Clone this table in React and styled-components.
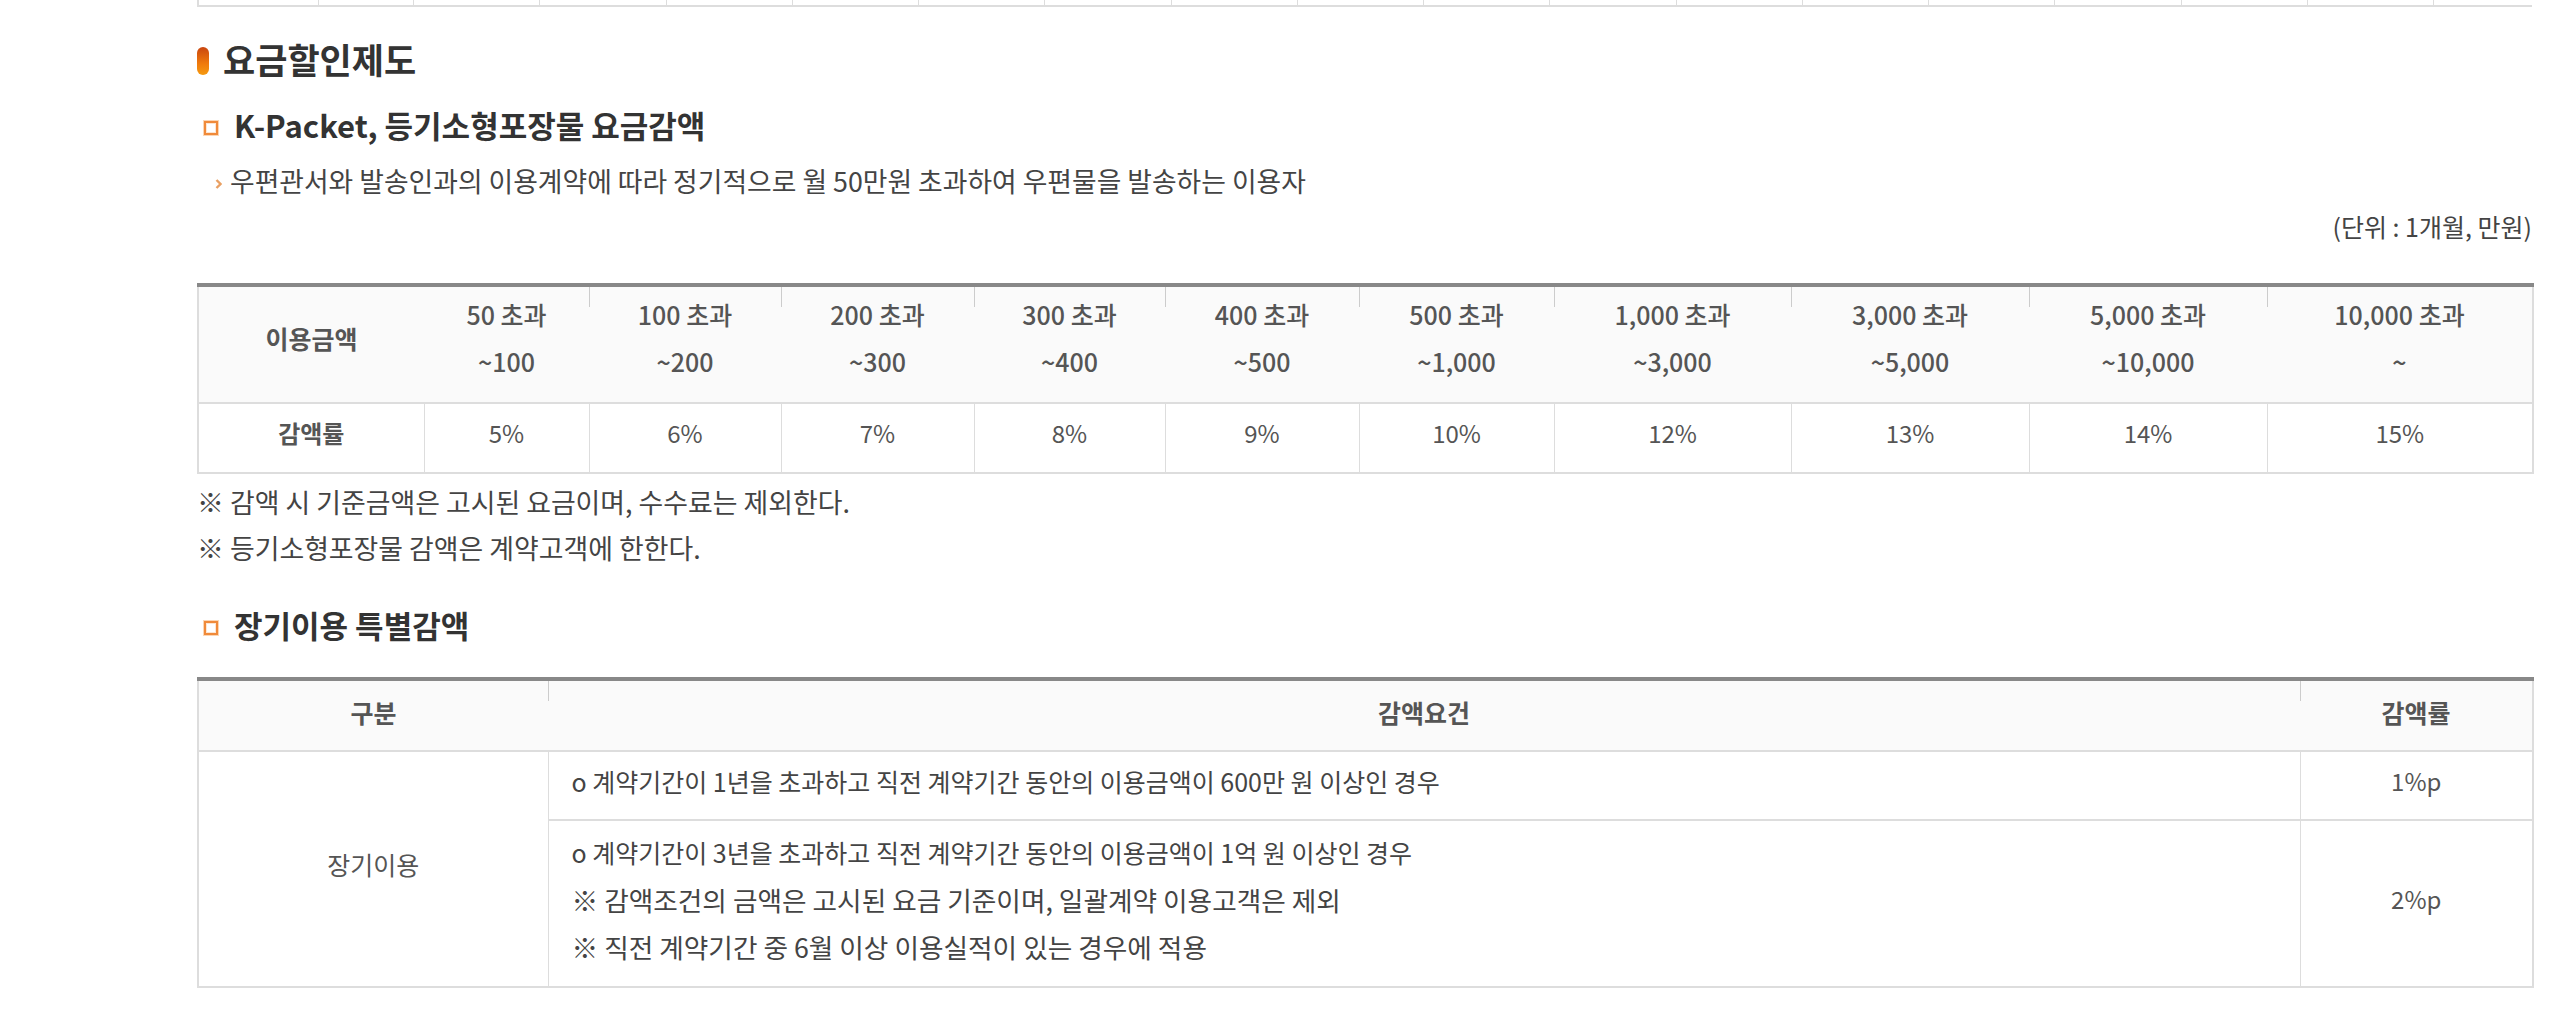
import React from 'react';
import styled, { createGlobalStyle } from 'styled-components';

const GlobalStyle = createGlobalStyle`
  body {
    margin: 0;
    background: #fff;
    font-family: "Noto Sans CJK KR", "Noto Sans", sans-serif;
    color: #444;
  }
`;

const Page = styled.div`
  width: 2335px;
  padding-left: 197px;
  padding-bottom: 26px;
`;

// bottom edge of the table above, cut off by the screenshot
const PrevTable = styled.div`
  display: grid;
  grid-template-columns: 120px 95px repeat(16, 1fr) 98px;
  height: 5px;
  border-left: 2px solid #ddd;
  border-bottom: 2px solid #ddd;
`;

const PrevCell = styled.div`
  border-right: 1px solid #ddd;
  &:last-child { border-right: none; }
`;

const Title = styled.h2`
  display: flex;
  align-items: center;
  gap: 14px;
  margin: 31px 0 0;
  font-size: 35px;
  line-height: 42px;
  font-weight: 700;
  color: #333;
`;

const TitleBar = styled.span`
  width: 12px;
  height: 28px;
  margin-top: 4px;
  border-radius: 6px;
  background: linear-gradient(to bottom, #c94610, #f07a0c 60%, #f59a10);
`;

const SubTitle = styled.h3`
  display: flex;
  align-items: center;
  gap: 16px;
  margin: ${p => p.$top}px 0 0;
  padding-left: 7px;
  font-size: 31px;
  line-height: 36px;
  font-weight: 700;
  color: #333;
`;

const SubMark = styled.span`
  box-sizing: border-box;
  width: 14px;
  height: 14px;
  margin-top: 6px;
  border: 2px solid #f08a3a;
  background: #fff;
  box-shadow: 0 0 0 1px #fcd6b4, inset 0 0 0 1px #fde6d2;
`;

const Desc = styled.p`
  display: flex;
  align-items: center;
  gap: 8px;
  margin: 21px 0 0;
  padding-left: 18px;
  font-size: 26.8px;
  line-height: 34px;
  color: #444;
`;

const Unit = styled.p`
  margin: 12px 0 0;
  text-align: right;
  font-size: 25px;
  line-height: 32px;
  color: #444;
`;

const Table = styled.table`
  width: 100%;
  table-layout: fixed;
  border-collapse: collapse;
  margin-top: ${p => p.$top}px;
  border-top: 4px solid #888;
  border-left: 2px solid #ddd;
  border-right: 2px solid #ddd;
  border-bottom: 2px solid #ddd;
  font-size: 24px;
  color: #555;
`;

const Th = styled.th`
  position: relative;
  background: #fafafa;
  padding: ${p => p.$pad || '4px 0 17px'};
  font-size: ${p => p.$size || 25}px;
  line-height: ${p => p.$lh || 47}px;
  font-weight: ${p => (p.$strong ? 700 : 500)};
  text-align: center;
  color: #555;
  border-bottom: 2px solid #ddd;

  & + &::before {
    content: '';
    position: absolute;
    left: 0;
    top: 0;
    width: 1px;
    height: 20px;
    background: #ccc;
  }
`;

const Td = styled.td`
  padding: ${p => p.$pad || '12px 0 22px'};
  font-size: ${p => p.$size || 24}px;
  line-height: ${p => p.$lh || 34}px;
  text-align: ${p => p.$align || 'center'};
  font-weight: ${p => (p.$strong ? 700 : 400)};
  border: 1px solid #ddd;
  border-bottom: 2px solid #ddd;
  vertical-align: middle;
`;

const Line = styled.div`
  font-size: ${p => p.$size || 26.7}px;
  line-height: 47px;
  color: #444;
`;

const Notes = styled.ul`
  list-style: none;
  margin: 5px 0 0;
  padding: 0;
  font-size: 26.9px;
  line-height: 46px;
  color: #444;
`;

const Chevron = () => (
  <svg width="7" height="10" viewBox="0 0 7 10" style={{ marginTop: 6 }}>
    <polyline points="1.5,1 5.5,5 1.5,9" fill="none" stroke="#e9a063" strokeWidth="2.4" />
  </svg>
);

const rangeCols = [226, 165, 192, 193, 191, 194, 195, 237, 238, 238, 266];
const ranges = [
  ['50 초과', '~100'],
  ['100 초과', '~200'],
  ['200 초과', '~300'],
  ['300 초과', '~400'],
  ['400 초과', '~500'],
  ['500 초과', '~1,000'],
  ['1,000 초과', '~3,000'],
  ['3,000 초과', '~5,000'],
  ['5,000 초과', '~10,000'],
  ['10,000 초과', '~'],
];
const rates = ['5%', '6%', '7%', '8%', '9%', '10%', '12%', '13%', '14%', '15%'];

export default function App() {
  return (
    <>
      <GlobalStyle />
      <Page>
        <PrevTable>
          {Array.from({ length: 19 }).map((_, i) => <PrevCell key={i} />)}
        </PrevTable>

        <Title><TitleBar />요금할인제도</Title>

        <SubTitle $top={27}><SubMark />K-Packet, 등기소형포장물 요금감액</SubTitle>
        <Desc><Chevron />우편관서와 발송인과의 이용계약에 따라 정기적으로 월 50만원 초과하여 우편물을 발송하는 이용자</Desc>
        <Unit>(단위 : 1개월, 만원)</Unit>

        <Table $top={41}>
          <colgroup>
            {rangeCols.map((w, i) => <col key={i} style={{ width: w }} />)}
          </colgroup>
          <thead>
            <tr>
              <Th $strong>이용금액</Th>
              {ranges.map(([a, b]) => (
                <Th key={a}>{a}<br />{b}</Th>
              ))}
            </tr>
          </thead>
          <tbody>
            <tr>
              <Td $strong>감액률</Td>
              {rates.map(r => <Td key={r}>{r}</Td>)}
            </tr>
          </tbody>
        </Table>

        <Notes>
          <li>※ 감액 시 기준금액은 고시된 요금이며, 수수료는 제외한다.</li>
          <li>※ 등기소형포장물 감액은 계약고객에 한한다.</li>
        </Notes>

        <SubTitle $top={36}><SubMark />장기이용 특별감액</SubTitle>

        <Table $top={34}>
          <colgroup>
            <col style={{ width: 350 }} />
            <col style={{ width: 1752 }} />
            <col style={{ width: 233 }} />
          </colgroup>
          <thead>
            <tr>
              <Th $strong $lh={36} $pad="13px 0 20px">구분</Th>
              <Th $strong $lh={36} $pad="13px 0 20px">감액요건</Th>
              <Th $strong $lh={36} $pad="13px 0 20px">감액률</Th>
            </tr>
          </thead>
          <tbody>
            <tr>
              <Td rowSpan={2} $size={25} $pad="0 0 10px">장기이용</Td>
              <Td $align="left" $pad="6px 0 14px 23px">
                <Line $size={25}>o 계약기간이 1년을 초과하고 직전 계약기간 동안의 이용금액이 600만 원 이상인 경우</Line>
              </Td>
              <Td $pad="0 0 10px">1%p</Td>
            </tr>
            <tr>
              <Td $align="left" $pad="8px 0 16px 23px">
                <Line $size={25}>o 계약기간이 3년을 초과하고 직전 계약기간 동안의 이용금액이 1억 원 이상인 경우</Line>
                <Line>※ 감액조건의 금액은 고시된 요금 기준이며, 일괄계약 이용고객은 제외</Line>
                <Line>※ 직전 계약기간 중 6월 이상 이용실적이 있는 경우에 적용</Line>
              </Td>
              <Td $pad="0 0 10px">2%p</Td>
            </tr>
          </tbody>
        </Table>
      </Page>
    </>
  );
}
